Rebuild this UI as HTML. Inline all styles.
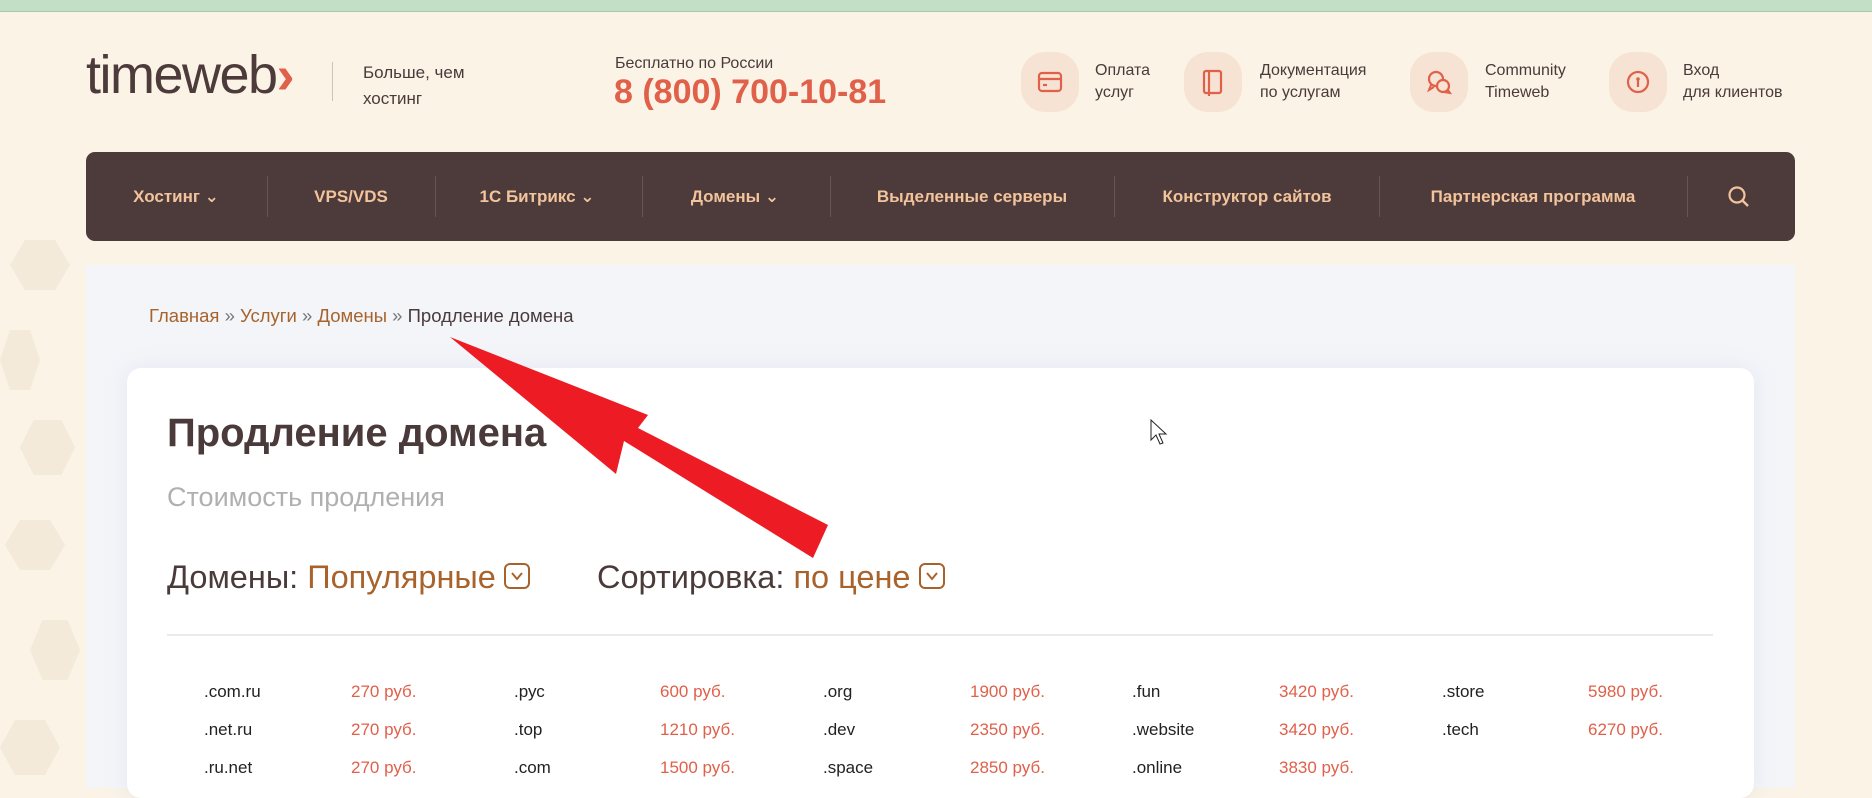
<!DOCTYPE html>
<html><head><meta charset="utf-8"><style>
*{margin:0;padding:0;box-sizing:border-box}
body{width:1872px;height:788px;overflow:hidden;background:#faf3e6;font-family:"Liberation Sans","DejaVu Sans",sans-serif;position:relative;color:#4a3a3a}
.abs{position:absolute}
.green{left:0;top:0;width:1872px;height:12px;background:#c3e0c6;border-bottom:1px solid #a9c9ad}
.hex{position:absolute;background:#f3ead9;clip-path:polygon(25% 0,75% 0,100% 50%,75% 100%,25% 100%,0 50%)}
.logo{left:86px;top:44px;font-size:54px;color:#4d3a3a;letter-spacing:-1.5px}
.logo span{color:#e0604a;font-weight:bold}
.ib{width:58px;height:60px;border-radius:24px;background:#f7e3d4;top:52px}
.it{font-size:16px;line-height:22px;color:#4a3a3a;top:60px}
.nav{left:86px;top:152px;width:1709px;height:89px;background:#4d3a3a;border-radius:9px}
.ni{position:absolute;top:0;height:89px;line-height:89px;color:#f3c49c;font-weight:bold;font-size:17px;transform:translateX(-50%);white-space:nowrap}
.nd{position:absolute;top:24px;width:1px;height:41px;background:#6b5350}
.panel{left:86px;top:265px;width:1709px;height:523px;background:#f3f5f9}
.card{left:127px;top:368px;width:1627px;height:430px;background:#fff;border-radius:14px;box-shadow:0 0 20px rgba(200,210,225,.35)}
.bc{left:149px;top:305px;font-size:18.5px;color:#4a3a3a}
.bc a{color:#a8632c;text-decoration:none}
.bc i{font-style:normal;color:#777}
h1{position:absolute;left:167px;top:411px;font-size:40px;font-weight:bold;color:#4a3a3a}
.sub{left:167px;top:482px;font-size:27px;color:#b0b0b0}
.f{top:559px;font-size:32.5px;color:#4a3a3a}
.f b{font-weight:normal;color:#a8632c}
.chk{display:inline-block;width:26px;height:26px;border:2px solid #a8632c;border-radius:6px;vertical-align:middle;position:relative;top:-3px;margin-left:8px}
.hr{left:167px;top:634px;width:1546px;height:2px;background:#e9ebef}
.d,.p{position:absolute;font-size:17px}
.d{color:#222}
.p{color:#e0604a}
</style></head><body>
<div class="abs green"></div>
<div class="hex" style="left:10px;top:240px;width:60px;height:50px"></div>
<div class="hex" style="left:0;top:330px;width:40px;height:60px"></div>
<div class="hex" style="left:20px;top:420px;width:55px;height:55px"></div>
<div class="hex" style="left:5px;top:520px;width:60px;height:50px"></div>
<div class="hex" style="left:30px;top:620px;width:50px;height:60px"></div>
<div class="hex" style="left:0;top:720px;width:60px;height:55px"></div>

<div class="abs logo">timeweb<span>&#x203A;</span></div>
<div class="abs" style="left:332px;top:62px;width:1px;height:39px;background:#cfc3b5"></div>
<div class="abs" style="left:363px;top:60px;font-size:17px;line-height:26px">Больше, чем<br>хостинг</div>
<div class="abs" style="left:615px;top:55px;font-size:16px">Бесплатно по России</div>
<div class="abs" style="left:614px;top:73px;font-size:34px;font-weight:bold;color:#e0604a">8 (800) 700-10-81</div>

<div class="abs ib" style="left:1021px"><svg width="58" height="60" viewBox="0 0 58 60"><rect x="18" y="21" width="22" height="18" rx="3" fill="none" stroke="#e0604a" stroke-width="2.2"/><line x1="18" y1="27" x2="40" y2="27" stroke="#e0604a" stroke-width="2.2"/><line x1="22" y1="33" x2="26" y2="33" stroke="#e0604a" stroke-width="2.2"/></svg></div>
<div class="abs it" style="left:1095px">Оплата<br>услуг</div>
<div class="abs ib" style="left:1184px"><svg width="58" height="60" viewBox="0 0 58 60"><rect x="20" y="19" width="17" height="22" rx="2" fill="none" stroke="#e0604a" stroke-width="2.2"/><line x1="25" y1="19" x2="25" y2="44" stroke="#e0604a" stroke-width="2.2"/></svg></div>
<div class="abs it" style="left:1260px">Документация<br>по услугам</div>
<div class="abs ib" style="left:1410px"><svg width="58" height="60" viewBox="0 0 58 60"><circle cx="26" cy="27" r="7" fill="none" stroke="#e0604a" stroke-width="2.2"/><circle cx="33" cy="34" r="6" fill="#f7e3d4" stroke="#e0604a" stroke-width="2.2"/><path d="M21 33 L19 38 L24 35 M38 38 L40 41 L34 40" fill="none" stroke="#e0604a" stroke-width="2"/></svg></div>
<div class="abs it" style="left:1485px">Community<br>Timeweb</div>
<div class="abs ib" style="left:1609px"><svg width="58" height="60" viewBox="0 0 58 60"><circle cx="29" cy="30" r="10" fill="none" stroke="#e0604a" stroke-width="2.2"/><circle cx="29" cy="27" r="1.8" fill="#e0604a"/><line x1="29" y1="27" x2="29" y2="35" stroke="#e0604a" stroke-width="2.2"/></svg></div>
<div class="abs it" style="left:1683px">Вход<br>для клиентов</div>

<div class="abs nav">
<div class="ni" style="left:90px">Хостинг &#8964;</div>
<div class="nd" style="left:181px"></div>
<div class="ni" style="left:265px">VPS/VDS</div>
<div class="nd" style="left:349px"></div>
<div class="ni" style="left:451px">1С Битрикс &#8964;</div>
<div class="nd" style="left:556px"></div>
<div class="ni" style="left:649px">Домены &#8964;</div>
<div class="nd" style="left:744px"></div>
<div class="ni" style="left:886px">Выделенные серверы</div>
<div class="nd" style="left:1028px"></div>
<div class="ni" style="left:1161px">Конструктор сайтов</div>
<div class="nd" style="left:1293px"></div>
<div class="ni" style="left:1447px">Партнерская программа</div>
<div class="nd" style="left:1601px"></div>
<svg class="abs" style="left:1641px;top:33px" width="24" height="24" viewBox="0 0 24 24"><circle cx="10" cy="10" r="7.5" fill="none" stroke="#f3c49c" stroke-width="2.2"/><line x1="15.5" y1="15.5" x2="21" y2="21" stroke="#f3c49c" stroke-width="2.4"/></svg>
</div>

<div class="abs panel"></div>
<div class="abs bc"><a>Главная</a> <i>»</i> <a>Услуги</a> <i>»</i> <a>Домены</a> <i>»</i> Продление домена</div>
<div class="abs card"></div>
<h1>Продление домена</h1>
<div class="abs sub">Стоимость продления</div>
<div class="abs f" style="left:167px">Домены: <b>Популярные</b><span class="chk"><svg width="22" height="22" viewBox="0 0 22 22" style="position:absolute;left:0;top:0"><path d="M6 8 L11 14 L16 8" fill="none" stroke="#a8632c" stroke-width="2"/></svg></span></div>
<div class="abs f" style="left:597px">Сортировка: <b>по цене</b><span class="chk"><svg width="22" height="22" viewBox="0 0 22 22" style="position:absolute;left:0;top:0"><path d="M6 8 L11 14 L16 8" fill="none" stroke="#a8632c" stroke-width="2"/></svg></span></div>
<div class="abs hr"></div>

<div class="d" style="left:204px;top:682px">.com.ru</div><div class="p" style="left:351px;top:682px">270 руб.</div>
<div class="d" style="left:204px;top:720px">.net.ru</div><div class="p" style="left:351px;top:720px">270 руб.</div>
<div class="d" style="left:204px;top:758px">.ru.net</div><div class="p" style="left:351px;top:758px">270 руб.</div>
<div class="d" style="left:514px;top:682px">.рус</div><div class="p" style="left:660px;top:682px">600 руб.</div>
<div class="d" style="left:514px;top:720px">.top</div><div class="p" style="left:660px;top:720px">1210 руб.</div>
<div class="d" style="left:514px;top:758px">.com</div><div class="p" style="left:660px;top:758px">1500 руб.</div>
<div class="d" style="left:823px;top:682px">.org</div><div class="p" style="left:970px;top:682px">1900 руб.</div>
<div class="d" style="left:823px;top:720px">.dev</div><div class="p" style="left:970px;top:720px">2350 руб.</div>
<div class="d" style="left:823px;top:758px">.space</div><div class="p" style="left:970px;top:758px">2850 руб.</div>
<div class="d" style="left:1132px;top:682px">.fun</div><div class="p" style="left:1279px;top:682px">3420 руб.</div>
<div class="d" style="left:1132px;top:720px">.website</div><div class="p" style="left:1279px;top:720px">3420 руб.</div>
<div class="d" style="left:1132px;top:758px">.online</div><div class="p" style="left:1279px;top:758px">3830 руб.</div>
<div class="d" style="left:1442px;top:682px">.store</div><div class="p" style="left:1588px;top:682px">5980 руб.</div>
<div class="d" style="left:1442px;top:720px">.tech</div><div class="p" style="left:1588px;top:720px">6270 руб.</div>

<svg class="abs" style="left:0;top:0" width="1872" height="788"><polygon points="450,337 648,415 638,428 828,525 813,558 624,441 616,474" fill="#ed1c24"/>
<path d="M1151 420 L1151 440 L1156 435 L1160 444 L1163 443 L1159 434 L1166 434 Z" fill="#fff" stroke="#222" stroke-width="1"/></svg>
</body></html>
